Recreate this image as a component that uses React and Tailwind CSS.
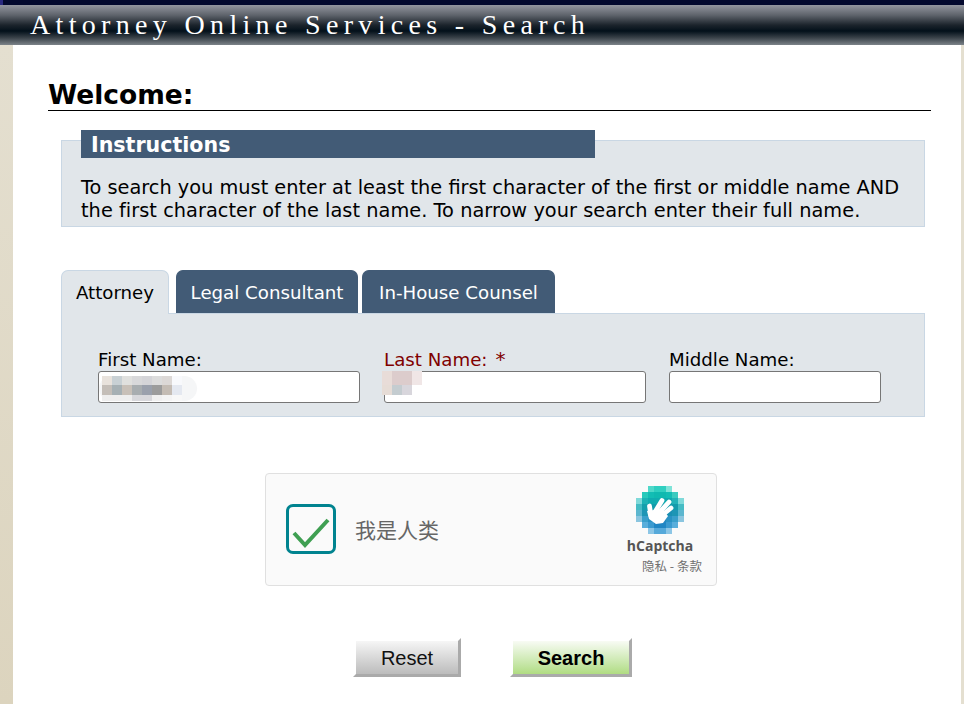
const dv = '"DejaVu Sans", Verdana, sans-serif';

function Mosaic({ cells, size, heights, className }) {
  return (
    <div className={className} aria-hidden="true">
      {cells.map((row, y) => (
        <div key={y} className="flex">
          {row.map((c, x) => (
            <div key={x} style={{ width: size, height: heights ? heights[y] : size, background: c || 'transparent' }} />
          ))}
        </div>
      ))}
    </div>
  );
}

const firstBlur = [
  ['#e8e2dc', '#c8d0d4', '#e0e0de', '#d8d8da', '#d4d4d8', '#dcdcdc', '#dcd8d6', '#f8f9fc'],
  ['#c4beb8', '#a6b0b4', '#c8c0b8', '#a8adb0', '#9aa0ac', '#9c9c9c', '#c4bcb4', '#e4e8f0'],
  ['#eeeeee', '#eeeeee', '#eeeeee', '#d8d8dc', '#d8d8dc', '#f0f0f0', '#f4f4f4', '#f8f8f8'],
];
const lastBlur = [
  ['#e8dcd8', '#dccccc', '#dccccc', '#f0e6e6'],
  ['#e6dcd6', '#c4ccd0', '#d8d6dc', null],
];
const logo = [
  [null, null, '#4fd8c9', '#2fcfc0', '#2fcfc0', '#7fe3d8', null, null],
  [null, '#28c9bb', '#12bdb4', '#0fb9b0', '#0fb9b0', '#12bdb4', '#3bcabf', null],
  ['#7fd9d9', '#1db3b5', '#10acb0', '#10acb0', '#10a8ae', '#10a8ae', '#22b2b8', '#7fd9d9'],
  ['#45bcc4', '#14a0ac', '#129cab', '#129cab', '#129aab', '#1299ab', '#149cac', '#45bcc4'],
  ['#5cb6cf', '#1e95b5', '#1a90b3', '#1a90b3', '#1a8fb3', '#1a8fb3', '#1e95b5', '#5cb6cf'],
  ['#8ac5df', '#3a9fcb', '#2a92c4', '#2288bf', '#2288bf', '#2a92c4', '#3a9fcb', '#8ac5df'],
  [null, '#5aaedb', '#3a9ad0', '#2086c4', '#2086c4', '#3a9ad0', '#5aaedb', null],
  [null, null, '#8cc6e6', '#55a9da', '#55a9da', '#8cc6e6', null, null],
];

function Field({ label, width, required, children, className = '' }) {
  return (
    <div className={`flex flex-col ${className}`} style={{ width }}>
      <label className={`text-[18.2px] leading-[19px] h-[19px] whitespace-nowrap ${required ? 'text-[#800000]' : 'text-black'}`}>
        {label}
        {required ? <span className="ml-[8px] text-[20px]">*</span> : null}
      </label>
      <div className="relative h-[32px] mt-[2px]">
        <div className="h-full bg-white border border-[#767676] rounded-[3px]" />
        {children}
      </div>
    </div>
  );
}

function Tab({ children, active, width, className = '' }) {
  return (
    <div
      className={`flex items-center justify-center text-[18.2px] rounded-t-[7px] border border-b-0 ${
        active ? 'h-[44px] bg-[#e1e6ea] border-[#c9d7e4] text-black' : 'h-[43px] pt-[2px] bg-[#425b76] border-[#425b76] text-white'
      } ${className}`}
      style={{ width }}
    >
      {children}
    </div>
  );
}

export default function App() {
  return (
    <div className="w-[964px] h-[704px] overflow-hidden flex flex-col bg-white" style={{ fontFamily: dv }}>
      <div className="h-[5px] bg-[linear-gradient(to_right,#2a2a80_0,#2a2a80_3px,#03092e_3px)]" />
      <div className="h-[40px] flex items-center pl-[30px] bg-[linear-gradient(to_bottom,#93969f_0%,#5f646c_25%,#1c242c_50%,#03101a_65%,#3a4249_82%,#7c8389_100%)]">
        <span
          className="text-white text-[28px] leading-[40px] tracking-[5.33px] whitespace-nowrap"
          style={{ fontFamily: '"Liberation Serif", "Times New Roman", serif' }}
        >
          Attorney Online Services - Search
        </span>
      </div>
      <div className="flex-1 flex min-h-0">
        <div className="w-[13px] bg-[linear-gradient(to_bottom,#e4dfd0,#dcd4be)]" />
        <div className="flex-1 min-w-0 flex flex-col pl-[35px] pr-[30px]">
          <h1 className="mt-[33px] h-[33px] text-[26.5px] leading-[34px] font-bold text-black border-b border-black w-[883px]">
            Welcome:
          </h1>
          <section className="ml-[13px] mt-[29px] w-[864px] h-[87px] bg-[#e1e6ea] border border-[#c9d7e4]">
            <div className="ml-[19px] -mt-[11px] w-[514px] h-[28px] bg-[#425b76] text-white font-bold text-[20.6px] leading-[30px] pl-[10px]">
              Instructions
            </div>
            <p className="ml-[19px] mt-[18px] text-[19.33px] leading-[23px] text-black whitespace-nowrap">
              To search you must enter at least the first character of the first or middle name AND
              <br />
              <span className="tracking-[0.035px]">the first character of the last name. To narrow your search enter their full name.</span>
            </p>
          </section>

          <div className="ml-[13px] mt-[43px] flex items-start relative z-10">
            <Tab active width={108}>Attorney</Tab>
            <Tab width={182} className="ml-[7px]">Legal Consultant</Tab>
            <Tab width={193} className="ml-[4px]">In-House Counsel</Tab>
          </div>
          <section className="ml-[13px] -mt-px w-[864px] h-[104px] bg-[#e1e6ea] border border-[#c9d7e4] flex pl-[36px] pt-[36px]">
            <Field label="First Name:" width={262}>
              <div className="absolute left-[1px] top-[5px] w-[98px] h-[25px] rounded-full bg-[#f5f6f7]" />
              <Mosaic cells={firstBlur} size={10} heights={[9, 10, 6]} className="absolute left-[4px] top-[5px]" />
            </Field>
            <Field label="Last Name:" width={262} required className="ml-[24px]">
              <Mosaic cells={lastBlur} size={10} heights={[14, 10]} className="absolute -left-[2px] top-0" />
            </Field>
            <Field label="Middle Name:" width={212} className="ml-[23px]" />
          </section>

          <div className="ml-[217px] mt-[56px] w-[452px] h-[113px] bg-[#fafafa] border border-[#e0e0e0] rounded-[4px] flex relative">
            <div className="ml-[20px] mt-[30px] w-[50px] h-[50px] border-[3px] border-[#00838f] rounded-[7px] bg-[#fafafa]">
              <svg width="44" height="44" viewBox="0 0 44 44" fill="none">
                <path d="M5 26 L16 38 L39 13" stroke="#3f9f52" strokeWidth="4" />
              </svg>
            </div>
            <div
              className="ml-[19px] mt-[42px] text-[21px] leading-[26px] text-[#666666]"
              style={{ fontFamily: '"Noto Sans CJK SC", "Noto Sans", sans-serif' }}
            >
              我是人类
            </div>
            <div className="absolute right-[18px] top-[12px] w-[76px] flex flex-col items-center">
              <div className="relative w-[48px] h-[48px]">
                <Mosaic cells={logo} size={6} />
                <svg className="absolute inset-0" width="48" height="48" viewBox="0 0 48 48" fill="none">
                  <path d="M11 25 L26 23 L32 30 L27 37 L20 38 L13 33 Z" fill="#ffffff" />
                  <g stroke="#ffffff" strokeWidth="4.8" strokeLinecap="round">
                    <path d="M15 30 L13.5 20" />
                    <path d="M19 26 L26 14.5" />
                    <path d="M22 28 L33 16" />
                    <path d="M24 31 L35 22" />
                  </g>
                </svg>
              </div>
              <div className="mt-[4px] text-[14px] leading-[16px] font-bold text-[#555555]" style={{ fontFamily: '"Open Sans", sans-serif' }}>
                hCaptcha
              </div>
              <div
                className="mt-[5px] self-end -mr-[4px] text-[12.5px] leading-[14px] text-[#707070] whitespace-nowrap"
                style={{ fontFamily: '"Noto Sans CJK SC", "Noto Sans", sans-serif' }}
              >
                隐私 - 条款
              </div>
            </div>
          </div>

          <div className="ml-[305px] mt-[52px] flex gap-[49px]" style={{ fontFamily: '"Liberation Sans", Arial, sans-serif' }}>
            <button className="w-[108px] h-[39px] border-[3px] border-t-transparent border-l-transparent border-r-[#aaaaaa] border-b-[#aaaaaa] bg-clip-padding bg-linear-to-b from-[#f6f6f6] to-[#bcbcbc] text-[20px] leading-none text-[#111111]">
              Reset
            </button>
            <button className="w-[122px] h-[39px] border-[3px] border-t-transparent border-l-transparent border-r-[#aaaaaa] border-b-[#aaaaaa] bg-clip-padding bg-linear-to-b from-[#f8fbf4] to-[#b0dc82] text-[20px] leading-none font-bold text-black">
              Search
            </button>
          </div>
        </div>
        <div className="w-[3px] bg-[#e4dfd0]" />
      </div>
    </div>
  );
}
